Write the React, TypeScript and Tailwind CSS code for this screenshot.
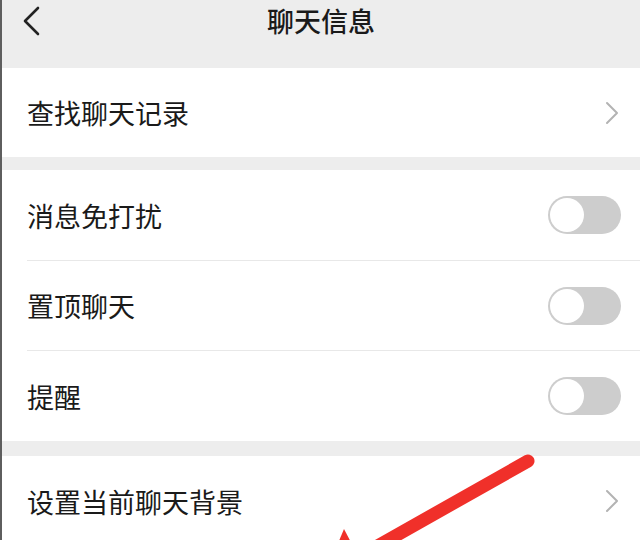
import React from "react";

const font = { fontFamily: '"Noto Sans CJK SC", "Noto Sans", sans-serif' };

function Chevron() {
	return (
		<svg width="16" height="24" viewBox="0 0 16 24" className="mr-[20px]">
			<path d="M3 2 L13 12 L3 22" fill="none" stroke="#b3b3b3" strokeWidth="2" strokeLinecap="round" strokeLinejoin="round" />
		</svg>
	);
}

function Toggle() {
	return (
		<div className="mr-[19px] flex h-[38px] w-[73px] items-center rounded-full bg-[#cdcdcd] pl-[2px]">
			<div className="h-[34px] w-[34px] rounded-full bg-white" />
		</div>
	);
}

function Row({ label, right, divider, h }: { label: string; right: React.ReactNode; divider?: boolean; h: string }) {
	return (
		<div className={`flex items-center bg-white pl-[25px] ${h}`}>
			<div className={`flex h-full flex-1 items-center justify-between ${divider ? "border-b border-[#e8e8e8]" : ""}`}>
				<span className="text-[27px] leading-none text-[#1a1a1a]">{label}</span>
				{right}
			</div>
		</div>
	);
}

export default function App() {
	return (
		<div className="relative h-[540px] w-[640px] overflow-hidden border-l-2 border-[#5e5e5e] bg-[#ededed]" style={font}>
			{/* Header */}
			<header className="grid h-[68px] grid-cols-[80px_1fr_80px] items-start">
				<button className="flex h-[42px] items-center pl-[20px]">
					<svg width="20" height="30" viewBox="0 0 20 30">
						<path d="M16 2 L3 15 L16 28" fill="none" stroke="#222" strokeWidth="2.6" strokeLinecap="round" strokeLinejoin="round" />
					</svg>
				</button>
				<h1 className="flex h-[42px] items-center justify-center text-[27px] font-medium text-[#1a1a1a]">聊天信息</h1>
				<div />
			</header>

			<Row label="查找聊天记录" right={<Chevron />} h="h-[89px]" />

			<div className="h-[13px]" />

			<Row label="消息免打扰" right={<Toggle />} divider h="h-[91px]" />
			<Row label="置顶聊天" right={<Toggle />} divider h="h-[90px]" />
			<Row label="提醒" right={<Toggle />} h="h-[90px]" />

			<div className="h-[15px]" />

			<Row label="设置当前聊天背景" right={<Chevron />} h="h-[90px]" />

			{/* red annotation arrow */}
			<svg className="pointer-events-none absolute left-0 top-0" width="640" height="540" viewBox="0 0 640 540">
				<line x1="526" y1="461" x2="372" y2="548" stroke="#f0302a" strokeWidth="13" strokeLinecap="round" />
				<polygon points="342,529 352,548 334,548" fill="#f0302a" />
			</svg>
		</div>
	);
}
